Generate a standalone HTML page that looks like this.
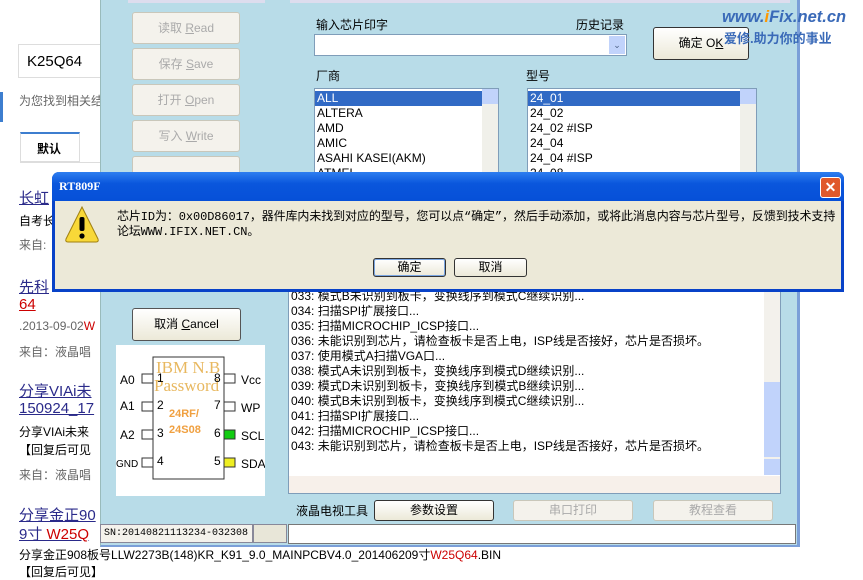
<!DOCTYPE html>
<html><head><meta charset="utf-8"><style>
*{margin:0;padding:0;box-sizing:border-box}
body{width:863px;height:571px;overflow:hidden;background:#fff;position:relative;font-family:"Liberation Sans","Noto Sans CJK SC",sans-serif;font-size:12px;color:#000}
.a{position:absolute;white-space:nowrap}
.btn{position:absolute;background:#f4f2ec;border:1px solid #c9c7ba;border-radius:3px;color:#aaa;text-align:center;font-size:12px}
.btn2{position:absolute;background:linear-gradient(#fff,#ece9d8);border:1px solid #003c74;border-radius:3px;text-align:center;font-size:12px;color:#000}
.lst{position:absolute;background:#fff;border:1px solid #7f9db9;font-size:12px;line-height:15px;overflow:hidden}
.lst div{padding-left:2px}
.sel{background:#316ac5;color:#fff}
.lk{color:#2a2a8a;text-decoration:underline;font-size:15px}
.g{color:#666;font-size:12px}
</style></head><body>
<!-- left webpage -->
<div class="a" style="left:18px;top:44px;width:90px;height:34px;border:1px solid #ddd;font-size:15px;padding:8px 0 0 8px">K25Q64</div>
<div class="a g" style="left:19px;top:92px">为您找到相关结</div>
<div class="a" style="left:0;top:92px;width:3px;height:30px;background:#3d7ecf"></div>
<div class="a" style="left:20px;top:132px;width:60px;height:30px;border:1px solid #ddd;border-top:2px solid #3d7ecf;font-weight:bold;padding:6px 0 0 16px">默认</div>
<div class="a" style="left:20px;top:162px;width:80px;border-top:1px solid #ddd"></div>
<div class="a lk" style="left:19px;top:187px">长虹</div>
<div class="a" style="left:19px;top:212px">自考长</div>
<div class="a g" style="left:19px;top:236px">来自:</div>
<div class="a lk" style="left:19px;top:276px">先科</div>
<div class="a lk" style="left:19px;top:296px;color:#c00">64</div>
<div class="a g" style="left:19px;top:319px">.2013-09-02<span style="color:#c00">W</span></div>
<div class="a g" style="left:19px;top:343px">来自：液晶唱</div>
<div class="a lk" style="left:19px;top:380px">分享VIAi未</div>
<div class="a lk" style="left:19px;top:400px">150924_17</div>
<div class="a" style="left:19px;top:423px">分享VIAi未来</div>
<div class="a" style="left:19px;top:441px">【回复后可见</div>
<div class="a g" style="left:19px;top:466px">来自：液晶唱</div>
<div class="a lk" style="left:19px;top:504px">分享金正90</div>
<div class="a lk" style="left:19px;top:523px">9寸 <span style="color:#c00">W25Q</span></div>
<div class="a" style="left:19px;top:546px">分享金正908板号LLW2273B(148)KR_K91_9.0_MAINPCBV4.0_201406209寸<span style="color:#c00">W25Q64</span>.BIN</div>
<div class="a" style="left:19px;top:563px">【回复后可见】</div>

<!-- app window -->
<div class="a" style="left:100px;top:0;width:700px;height:547px;background:#b8dce8;border-left:1px solid #9bb;border-right:3px solid #7b9fd8;border-bottom:2px solid #7b9fd8"></div>
<div class="a" style="left:128px;top:0;width:137px;height:3px;background:#dde"></div>
<div class="a" style="left:290px;top:0;width:500px;height:3px;background:#dde"></div>
<div class="btn" style="left:132px;top:12px;width:108px;height:32px;line-height:30px">读取 <u>R</u>ead</div>
<div class="btn" style="left:132px;top:48px;width:108px;height:32px;line-height:30px">保存 <u>S</u>ave</div>
<div class="btn" style="left:132px;top:84px;width:108px;height:32px;line-height:30px">打开 <u>O</u>pen</div>
<div class="btn" style="left:132px;top:120px;width:108px;height:32px;line-height:30px">写入 <u>W</u>rite</div>
<div class="btn" style="left:132px;top:156px;width:108px;height:30px"></div>
<div class="btn2" style="left:132px;top:308px;width:109px;height:33px;line-height:31px;border-color:#555">取消 <u>C</u>ancel</div>
<!-- chip image -->
<div class="a" style="left:116px;top:345px;width:149px;height:151px;background:#fff"></div>
<svg class="a" style="left:116px;top:345px" width="149" height="151">
<rect x="37" y="12" width="71" height="122" fill="#fff" stroke="#333"/>
<text x="40" y="28" font-family="Liberation Serif" font-size="17" fill="#e8b860">IBM N.B</text>
<text x="38" y="46" font-family="Liberation Serif" font-size="17" fill="#e8b860">Password</text>
<text x="53" y="72" font-size="11" fill="#f0a040" font-weight="bold">24RF/</text>
<text x="53" y="88" font-size="11" fill="#f0a040" font-weight="bold">24S08</text>
<g font-size="12" fill="#000">
<text x="4" y="39">A0</text><text x="41" y="37">1</text>
<text x="4" y="65">A1</text><text x="41" y="64">2</text>
<text x="4" y="94">A2</text><text x="41" y="92">3</text>
<text x="0" y="122" font-size="10">GND</text><text x="41" y="120">4</text>
<text x="98" y="37">8</text><text x="125" y="39">Vcc</text>
<text x="98" y="64">7</text><text x="125" y="67">WP</text>
<text x="98" y="92">6</text><text x="125" y="95">SCL</text>
<text x="98" y="120">5</text><text x="125" y="123">SDA</text></g>
<g fill="#fff" stroke="#333"><rect x="26" y="29" width="11" height="9"/><rect x="26" y="57" width="11" height="9"/><rect x="26" y="85" width="11" height="9"/><rect x="26" y="113" width="11" height="9"/><rect x="108" y="29" width="11" height="9"/><rect x="108" y="57" width="11" height="9"/></g>
<rect x="108" y="85" width="11" height="9" fill="#1c1" stroke="#333"/><rect x="108" y="113" width="11" height="9" fill="#ee2" stroke="#333"/>
</svg>
<div class="a" style="left:100px;top:524px;width:153px;height:19px;border:1px solid #889;background:#f4f2ec;font-family:'Liberation Mono',monospace;font-size:10px;padding:3px 0 0 3px">SN:20140821113234-032308</div>
<div class="a" style="left:253px;top:524px;width:34px;height:19px;border:1px solid #889;background:#e8e6d8"></div>

<div class="a" style="left:316px;top:16px">输入芯片印字</div>
<div class="a" style="left:576px;top:16px">历史记录</div>
<div class="a" style="left:314px;top:34px;width:313px;height:22px;background:#fff;border:1px solid #7f9db9"></div>
<div class="a" style="left:609px;top:36px;width:16px;height:18px;background:#c1d3fb;color:#4d6185;font-size:9px;text-align:center;line-height:18px">⌄</div>
<div class="btn2" style="left:653px;top:27px;width:96px;height:33px;line-height:31px;border-color:#333">确定 O<u>K</u></div>
<div class="a" style="left:316px;top:67px">厂商</div>
<div class="a" style="left:526px;top:67px">型号</div>
<div class="lst" style="left:314px;top:88px;width:185px;height:90px;padding-top:2px"><div class="sel" style="margin-right:16px">ALL</div><div>ALTERA</div><div>AMD</div><div>AMIC</div><div>ASAHI KASEI(AKM)</div><div>ATMEL</div></div>
<div class="a" style="left:482px;top:89px;width:16px;height:88px;background:#f0f0ea"><div style="height:15px;background:#c1d3fb"></div></div>
<div class="lst" style="left:527px;top:88px;width:230px;height:90px;padding-top:2px"><div class="sel" style="margin-right:16px">24_01</div><div>24_02</div><div>24_02 #ISP</div><div>24_04</div><div>24_04 #ISP</div><div>24_08</div></div>
<div class="a" style="left:740px;top:89px;width:16px;height:88px;background:#f0f0ea"><div style="height:15px;background:#c1d3fb"></div></div>

<!-- log -->
<div class="a" style="left:288px;top:291px;width:493px;height:203px;background:#fff;border:1px solid #7f9db9"></div>
<div class="a" style="left:764px;top:292px;width:16px;height:183px;background:#f3f1ec"><div style="position:absolute;top:90px;width:16px;height:75px;background:#c1d3fb"></div><div style="position:absolute;top:167px;width:16px;height:16px;background:#c1d3fb"></div></div>
<div class="a" style="left:289px;top:476px;width:491px;height:17px;background:#f7f0ea"></div>
<div class="a" style="left:291px;top:289px;line-height:15px;font-size:12px">033: 模式B未识别到板卡，变换线序到模式C继续识别...<br>034: 扫描SPI扩展接口...<br>035: 扫描MICROCHIP_ICSP接口...<br>036: 未能识别到芯片，请检查板卡是否上电，ISP线是否接好，芯片是否损坏。<br>037: 使用模式A扫描VGA口...<br>038: 模式A未识别到板卡，变换线序到模式D继续识别...<br>039: 模式D未识别到板卡，变换线序到模式B继续识别...<br>040: 模式B未识别到板卡，变换线序到模式C继续识别...<br>041: 扫描SPI扩展接口...<br>042: 扫描MICROCHIP_ICSP接口...<br>043: 未能识别到芯片，请检查板卡是否上电，ISP线是否接好，芯片是否损坏。</div>
<div class="a" style="left:296px;top:502px;font-size:12px">液晶电视工具</div>
<div class="btn2" style="left:374px;top:500px;width:120px;height:21px;line-height:19px;border-color:#333">参数设置</div>
<div class="btn" style="left:513px;top:500px;width:120px;height:21px;line-height:19px">串口打印</div>
<div class="btn" style="left:653px;top:500px;width:120px;height:21px;line-height:19px">教程查看</div>
<div class="a" style="left:288px;top:524px;width:508px;height:20px;background:#fff;border:1px solid #777"></div>

<!-- watermark -->
<div class="a" style="left:722px;top:8px;color:#3a6ab8;font-size:16.5px;font-style:italic;font-weight:bold">www.<span style="color:#f90">i</span>Fix.net.cn</div>
<div class="a" style="left:724px;top:28px;color:#3a6ab8;font-size:13px;font-weight:bold">爱修.助力你的事业</div>

<!-- dialog -->
<div class="a" style="left:52px;top:172px;width:792px;height:120px;background:#ece9d8;border:3px solid #0842c8;border-top:0;border-radius:7px 7px 0 0"></div>
<div class="a" style="left:52px;top:172px;width:792px;height:29px;background:linear-gradient(#2d7ef0,#0a56dc 40%,#0650d8);border-radius:7px 7px 0 0;color:#fff;font-family:'Liberation Serif',serif;font-weight:bold;font-size:12px;padding:7px 0 0 7px">RT809F</div>
<div class="a" style="left:820px;top:177px;width:21px;height:21px;background:#e0592c;border:1px solid #fff;border-radius:3px;color:#fff;font-size:14px;font-weight:bold;text-align:center;line-height:19px">✕</div>
<svg class="a" style="left:64px;top:205px" width="36" height="38"><path d="M18 2 L34 34 Q35 37 32 37 L4 37 Q1 37 2 34 Z" fill="#f8d838" stroke="#a08010"/><rect x="15.5" y="12" width="5" height="14" rx="2" fill="#000"/><circle cx="18" cy="31" r="2.6" fill="#000"/></svg>
<div class="a" style="left:117px;top:210px;font-family:'Liberation Mono','Noto Sans CJK SC',monospace;font-size:12px;line-height:15px;letter-spacing:-0.1px">芯片ID为：0x00D86017，器件库内未找到对应的型号，您可以点“确定”，然后手动添加，或将此消息内容与芯片型号，反馈到技术支持<br>论坛WWW.IFIX.NET.CN。</div>
<div class="btn2" style="left:373px;top:258px;width:73px;height:19px;line-height:17px;border-color:#333;box-shadow:inset 0 0 0 1px #7aa5e0">确定</div>
<div class="btn2" style="left:454px;top:258px;width:73px;height:19px;line-height:17px;border-color:#333">取消</div>
</body></html>
